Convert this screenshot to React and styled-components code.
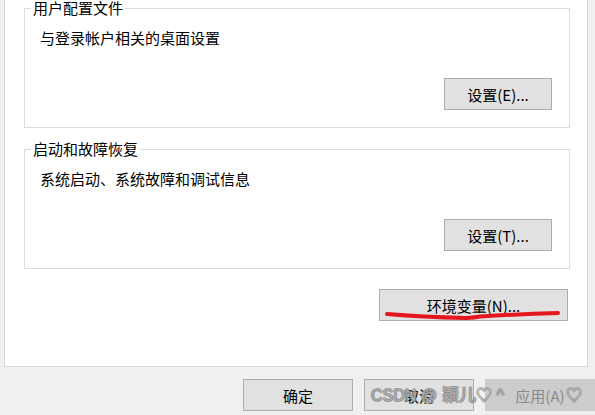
import styled, { createGlobalStyle } from "styled-components";

const GlobalStyle = createGlobalStyle`
	html, body {
		margin: 0;
		padding: 0;
		background: #f0f0f0;
	}
	body {
		width: 595px;
		height: 415px;
		overflow: hidden;
		font-family: "Noto Sans CJK SC", "Liberation Sans", sans-serif;
		font-size: 15px;
		color: #000;
	}
`;

const Dialog = styled.div`
	position: relative;
	width: 595px;
	height: 415px;
`;

const Panel = styled.div`
	box-sizing: border-box;
	margin-left: 4px;
	width: 584px;
	height: 367px;
	background: #fff;
	border: 1px solid #d9d9d9;
	border-top: none;
	padding-left: 19px;
	display: flex;
	flex-direction: column;
`;

const Group = styled.fieldset`
	box-sizing: border-box;
	width: 546px;
	min-width: 0;
	margin: ${(p) => p.$top}px 0 0;
	padding: 0;
	border: 1px solid #dcdcdc;
`;

const Legend = styled.legend`
	margin-left: 6px;
	padding: 0 2px;
	line-height: 16px;
	font-size: 15px;
`;

const GroupBody = styled.div`
	padding: 12px 17px 17px 15px;
	display: flex;
	flex-direction: column;
`;

const Desc = styled.div`
	line-height: 20px;
`;

const Button = styled.button`
	position: relative;
	box-sizing: border-box;
	width: ${(p) => p.$w || 108}px;
	height: 32px;
	padding: 0;
	font-family: "Noto Sans CJK SC", "Liberation Sans", sans-serif;
	font-size: 15px;
	color: ${(p) => (p.disabled ? "#8a8a8a" : "#000")};
	background: ${(p) => (p.disabled ? "#cccccc" : "#e1e1e1")};
	border: 1px solid ${(p) => (p.disabled ? "#cccccc" : "#adadad")};
	border-radius: 0;
`;

const GroupButton = styled(Button)`
	align-self: flex-end;
	margin-top: 30px;
`;

const EnvRow = styled.div`
	display: flex;
	justify-content: flex-end;
	width: 544px;
	margin-top: 20px;
`;

const Mark = styled.svg`
	position: absolute;
	left: 2px;
	top: 18px;
	pointer-events: none;
`;

const Footer = styled.div`
	display: flex;
	gap: 11px;
	padding: 12px 0 0 243px;
`;

const Watermark = styled.div`
	position: absolute;
	left: 371px;
	top: 384px;
	font-family: "Liberation Sans", "Noto Sans CJK SC", sans-serif;
	font-size: 16px;
	line-height: 24px;
	color: rgba(250, 250, 250, 0.35);
	text-shadow: 1px 0 rgba(130, 130, 130, 0.75), -1px 0 rgba(130, 130, 130, 0.75),
		0 1px rgba(130, 130, 130, 0.75), 0 -1px rgba(130, 130, 130, 0.75);
	white-space: pre;
	pointer-events: none;
`;

const Name = styled.span`
	margin-left: 5px;
	font-size: 17px;
`;

const Tail = styled.span`
	margin-left: 62px;
`;

export default function App() {
	return (
		<Dialog>
			<GlobalStyle />
			<Panel>
				<Group $top={0}>
					<Legend>用户配置文件</Legend>
					<GroupBody>
						<Desc>与登录帐户相关的桌面设置</Desc>
						<GroupButton>设置(E)...</GroupButton>
					</GroupBody>
				</Group>
				<Group $top={13}>
					<Legend>启动和故障恢复</Legend>
					<GroupBody>
						<Desc>系统启动、系统故障和调试信息</Desc>
						<GroupButton>设置(T)...</GroupButton>
					</GroupBody>
				</Group>
				<EnvRow>
					<Button $w={189}>
						环境变量(N)...
						<Mark width="180" height="14" viewBox="0 0 180 14">
							<path
								d="M5 6 Q 40 9, 84 10 Q 93 9.5, 98 8.5 Q 140 6, 176 5"
								fill="none"
								stroke="#e6161e"
								strokeWidth="4"
								strokeLinecap="round"
							/>
						</Mark>
					</Button>
				</EnvRow>
			</Panel>
			<Footer>
				<Button $w={110}>确定</Button>
				<Button $w={110}>取消</Button>
				<Button $w={110} disabled>
					应用(A)
				</Button>
			</Footer>
			<Watermark>
				CSDN @<Name>颖儿</Name>♡ ^<Tail>♡</Tail>
			</Watermark>
		</Dialog>
	);
}
